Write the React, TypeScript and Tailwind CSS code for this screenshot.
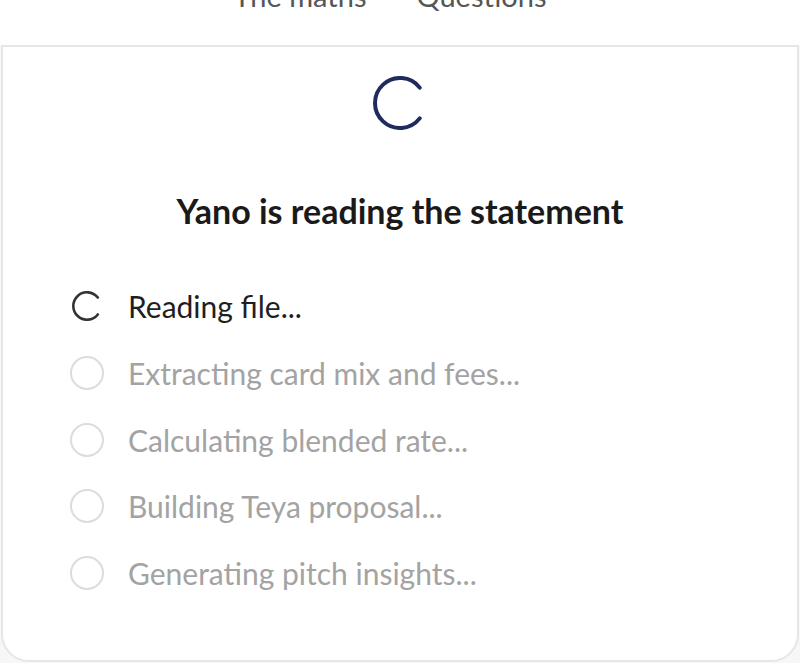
import React from 'react'

const steps = [
  { label: 'Reading file...', state: 'active' },
  { label: 'Extracting card mix and fees...', state: 'pending' },
  { label: 'Calculating blended rate...', state: 'pending' },
  { label: 'Building Teya proposal...', state: 'pending' },
  { label: 'Generating pitch insights...', state: 'pending' },
]

const Arc = ({ size, stroke, color }: { size: number; stroke: number; color: string }) => {
  const r = (size - stroke) / 2
  const c = size / 2
  // open "C" shape, gap on the right side
  const a0 = (-38 * Math.PI) / 180
  const a1 = (38 * Math.PI) / 180
  const x0 = c + r * Math.cos(a0)
  const y0 = c + r * Math.sin(a0)
  const x1 = c + r * Math.cos(a1)
  const y1 = c + r * Math.sin(a1)
  return (
    <svg width={size} height={size} viewBox={`0 0 ${size} ${size}`}>
      <path
        d={`M ${x0} ${y0} A ${r} ${r} 0 1 0 ${x1} ${y1}`}
        fill="none"
        stroke={color}
        strokeWidth={stroke}
        strokeLinecap="round"
      />
    </svg>
  )
}

export default function App() {
  return (
    <div className="min-h-screen bg-[#f7f7f7] font-['Lato','Noto_Sans',sans-serif]">
      {/* Tabs, scrolled mostly out of view */}
      <div className="h-[45px] overflow-hidden bg-white">
        <div className="-mt-[21px] flex justify-center gap-[50px] pr-[20px] text-[29px] leading-[34px] text-[#555]">
          <span>The maths</span>
          <span>Questions</span>
        </div>
      </div>

      <div className="mx-[1px] h-[617px] rounded-b-[28px] border-2 border-[#e6e6e6] bg-white pt-[29px]">
        <div className="flex justify-center">
          <Arc size={54} stroke={4} color="#1f2b5c" />
        </div>

        <h2 className="mt-[62px] text-center text-[34px] leading-[38px] font-bold text-[#1a1a1a]">
          Yano is reading the statement
        </h2>

        <ul className="mt-[43px] pl-[66px]">
          {steps.map((s) => (
            <li key={s.label} className="flex h-[66.7px] items-center gap-[23px]">
              <div className="flex h-[36px] w-[36px] items-center justify-center">
                {s.state === 'active' ? (
                  <Arc size={30} stroke={2.6} color="#333" />
                ) : (
                  <div className="h-[34px] w-[34px] rounded-full border-2 border-[#dcdcdc]" />
                )}
              </div>
              <span
                className={`text-[30px] leading-[36px] ${
                  s.state === 'active' ? 'text-[#1f1f1f]' : 'text-[#a3a3a3]'
                }`}
              >
                {s.label}
              </span>
            </li>
          ))}
        </ul>
      </div>
    </div>
  )
}
